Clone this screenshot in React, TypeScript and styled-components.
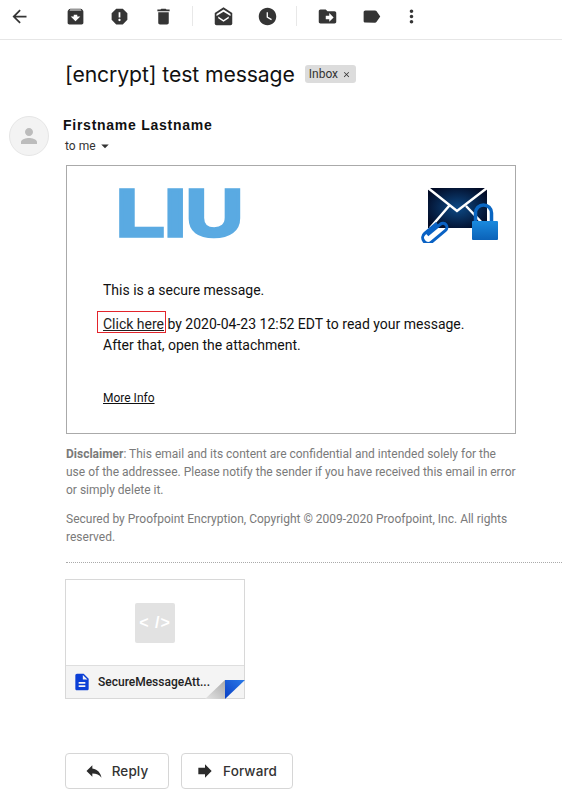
import React from "react";
import styled, { createGlobalStyle } from "styled-components";
import {
  MdArchive,
  MdArrowBack,
  MdArrowDropDown,
  MdClose,
  MdDelete,
  MdDescription,
  MdDriveFileMove,
  MdForward,
  MdLabel,
  MdMoreVert,
  MdPerson,
  MdReply,
  MdReport,
  MdWatchLater,
} from "react-icons/md";

const GlobalStyle = createGlobalStyle`
  html, body {
    margin: 0;
    padding: 0;
    background: #fff;
    font-family: Roboto, "Liberation Sans", sans-serif;
    overflow: hidden;
  }
`;

const Page = styled.div`
  width: 562px;
  height: 807px;
  overflow: hidden;
`;

const Toolbar = styled.div`
  display: flex;
  align-items: flex-start;
  height: 40px;
  padding: 4px 0 0 7px;
  box-sizing: border-box;
  border-bottom: 1px solid #e6e6e6;
`;

const IconButton = styled.div<{ $narrow?: boolean; $before?: number; $after?: number }>`
  display: flex;
  align-items: center;
  justify-content: center;
  width: ${(p) => (p.$narrow ? 24 : 44)}px;
  height: 24px;
  margin-left: ${(p) => p.$before ?? 0}px;
  margin-right: ${(p) => p.$after ?? 0}px;
  color: #353535;
  font-size: 21px;
`;

const Divider = styled.div`
  width: 1px;
  height: 20px;
  margin: 2px 8px 0 7px;
  background: #e8e8e8;
`;

const Content = styled.div`
  padding: 19px 0 0 65px;
`;

const SubjectRow = styled.div`
  display: flex;
  align-items: center;
  height: 30px;
`;

const Subject = styled.h1`
  margin: 0;
  font-family: Inter, sans-serif;
  font-size: 21.2px;
  font-weight: 400;
  letter-spacing: -0.1px;
  color: #111;
`;

const Chip = styled.span`
  display: inline-flex;
  align-items: center;
  gap: 4px;
  height: 18px;
  margin-left: 10px;
  padding: 0 5px 0 4px;
  border-radius: 3px;
  background: #dcdcdc;
  font-size: 12px;
  color: #333;
`;

const SenderRow = styled.div`
  display: flex;
  margin: 27px 0 0 -56px;
`;

const Avatar = styled.div`
  display: flex;
  align-items: center;
  justify-content: center;
  width: 40px;
  height: 40px;
  border-radius: 50%;
  box-sizing: border-box;
  border: 1px solid #e6e6e6;
  background: #f3f3f3;
  color: #bcbcbc;
  font-size: 24px;
`;

const SenderText = styled.div`
  margin: 1px 0 0 14px;
`;

const SenderName = styled.div`
  font-family: "Liberation Sans", sans-serif;
  font-size: 14px;
  font-weight: 700;
  letter-spacing: 0.74px;
  line-height: 16px;
  color: #111;
`;

const ToMe = styled.div`
  display: flex;
  align-items: center;
  margin: 4px 0 0 2px;
  font-size: 12px;
  line-height: 16px;
  color: #333;
`;

const MessageCard = styled.div`
  box-sizing: border-box;
  width: 450px;
  height: 269px;
  margin: 9px 0 0 1px;
  padding: 21px 17px 0 36px;
  border: 1px solid #aaa;
`;

const Branding = styled.div`
  display: flex;
  justify-content: space-between;
  height: 56px;
`;

const LogoMark = styled.svg`
  margin-left: 15px;
  overflow: visible;
`;

const BodyLine = styled.p<{ $top: number }>`
  margin: ${(p) => p.$top}px 0 0;
  font-size: 14px;
  line-height: 21px;
  color: #111;
`;

const SecureLink = styled.a`
  position: relative;
  color: #222;
  text-decoration: underline;

  &::after {
    content: "";
    position: absolute;
    left: -6px;
    right: -2px;
    top: -5px;
    bottom: -1px;
    border: 1px solid #e3242b;
  }
`;

const MoreInfo = styled.a`
  display: block;
  margin-top: 34px;
  font-size: 12px;
  line-height: 16px;
  color: #111;
  text-decoration: underline;
`;

const FinePrint = styled.p<{ $top: number }>`
  width: 452px;
  margin: ${(p) => p.$top}px 0 0 1px;
  font-size: 12px;
  line-height: 18px;
  color: #7a7a7a;

  b {
    font-weight: 700;
  }
`;

const Rule = styled.div`
  margin: 16px 0 0 1px;
  border-top: 1px dotted #aaa;
`;

const Attachment = styled.div`
  position: relative;
  box-sizing: border-box;
  width: 180px;
  height: 120px;
  margin-top: 16px;
  border: 1px solid #d8d8d8;
  display: flex;
  flex-direction: column;
`;

const Preview = styled.div`
  flex: 1;
  display: flex;
  align-items: center;
  justify-content: center;
`;

const CodeTile = styled.div`
  display: flex;
  align-items: center;
  justify-content: center;
  width: 40px;
  height: 40px;
  border-radius: 2px;
  background: #e2e2e2;
  color: #fff;
  font-family: "Liberation Sans", sans-serif;
  font-size: 16px;
  font-weight: 700;
  letter-spacing: 1px;
`;

const AttachmentBar = styled.div`
  display: flex;
  align-items: center;
  height: 32px;
  padding-left: 6px;
  border-top: 1px solid #dedede;
  background: #f4f4f4;
  color: #0b3fd6;
  font-size: 20px;
`;

const FileName = styled.span`
  margin-left: 6px;
  font-size: 12px;
  font-weight: 500;
  color: #222;
`;

const Fold = styled.svg`
  position: absolute;
  right: -1px;
  bottom: -1px;
`;

const Actions = styled.div`
  display: flex;
  gap: 12px;
  margin-top: 54px;
`;

const ActionButton = styled.button<{ $width: number }>`
  display: flex;
  align-items: center;
  justify-content: center;
  gap: 8px;
  width: ${(p) => p.$width}px;
  height: 36px;
  padding: 0 2px 0 0;
  border: 1px solid #d6d6d6;
  border-radius: 4px;
  background: #fff;
  font-family: Inter, Roboto, sans-serif;
  font-size: 13.5px;
  font-weight: 500;
  letter-spacing: 0.1px;
  color: #333;

  svg {
    font-size: 20px;
    color: #2b2b2b;
  }
`;

const LiuLogo = () => (
  <LogoMark width="124" height="54" viewBox="0 0 124 54">
    <text
      x="-2"
      y="49"
      textLength="127"
      lengthAdjust="spacingAndGlyphs"
      fontFamily="Liberation Sans"
      fontWeight="700"
      fontSize="67"
      fill="#5aaae2"
      stroke="#5aaae2"
      strokeWidth="3.5"
    >
      LIU
    </text>
  </LogoMark>
);

const MarkUnreadIcon = () => (
  <svg width="21" height="21" viewBox="0 0 24 24" fill="currentColor">
    <path d="M12 1.5 2 8v12a2 2 0 0 0 2 2h16a2 2 0 0 0 2-2V8z" />
    <path d="M12 4 4 9.2v2.2l8-4.8 8 4.8V9.2z" fill="#fff" />
    <path d="m6 12 6 4 6-4v2l-6 4-6-4z" fill="#fff" />
  </svg>
);

const SecureMailIcon = () => (
  <svg width="82" height="56" viewBox="0 0 82 56">
    <defs>
      <radialGradient id="mailGlow" cx="50%" cy="50%" r="60%">
        <stop offset="0%" stopColor="#0d4a86" />
        <stop offset="100%" stopColor="#020b26" />
      </radialGradient>
      <linearGradient id="lockBody" x1="0" y1="0" x2="0" y2="1">
        <stop offset="0%" stopColor="#1a8ade" />
        <stop offset="100%" stopColor="#0b62b8" />
      </linearGradient>
    </defs>
    <rect x="12" y="1" width="59" height="40" fill="url(#mailGlow)" />
    <path d="M12 1 41 24 71 1M14 41 33 19M71 41 50 19" fill="none" stroke="#fff" strokeWidth="2.5" />
    <path d="M59.5 36V26a8 8 0 0 1 16 0V36" fill="none" stroke="#0a66c2" strokeWidth="3.5" />
    <rect x="56" y="34" width="26" height="19" rx="1" fill="url(#lockBody)" />
    <path
      d="M0-9V7a5.5 5.5 0 0 0 11 0V-11a4 4 0 0 0-8 0V6"
      fill="none"
      stroke="#0a62c4"
      strokeWidth="3"
      transform="translate(14 42) rotate(50)"
    />
  </svg>
);

export default function App() {
  return (
    <Page>
      <GlobalStyle />
      <Toolbar>
        <IconButton $narrow $after={22}>
          <MdArrowBack />
        </IconButton>
        <IconButton><MdArchive /></IconButton>
        <IconButton><MdReport /></IconButton>
        <IconButton><MdDelete /></IconButton>
        <Divider />
        <IconButton><MarkUnreadIcon /></IconButton>
        <IconButton><MdWatchLater /></IconButton>
        <Divider />
        <IconButton><MdDriveFileMove /></IconButton>
        <IconButton><MdLabel /></IconButton>
        <IconButton $narrow $before={6}>
          <MdMoreVert />
        </IconButton>
      </Toolbar>
      <Content>
        <SubjectRow>
          <Subject>[encrypt] test message</Subject>
          <Chip>
            Inbox <MdClose size={9} />
          </Chip>
        </SubjectRow>
        <SenderRow>
          <Avatar><MdPerson /></Avatar>
          <SenderText>
            <SenderName>Firstname Lastname</SenderName>
            <ToMe>
              to me <MdArrowDropDown size={18} />
            </ToMe>
          </SenderText>
        </SenderRow>
        <MessageCard>
          <Branding>
            <LiuLogo />
            <SecureMailIcon />
          </Branding>
          <BodyLine $top={37}>This is a secure message.</BodyLine>
          <BodyLine $top={13}>
            <SecureLink>Click here</SecureLink> by 2020-04-23 12:52 EDT to read your message.
            <br />
            After that, open the attachment.
          </BodyLine>
          <MoreInfo>More Info</MoreInfo>
        </MessageCard>
        <FinePrint $top={11}>
          <b>Disclaimer</b>: This email and its content are confidential and intended solely for the use of the
          addressee. Please notify the sender if you have received this email in error or simply delete it.
        </FinePrint>
        <FinePrint $top={11}>
          Secured by Proofpoint Encryption, Copyright © 2009-2020 Proofpoint, Inc. All rights reserved.
        </FinePrint>
        <Rule />
        <Attachment>
          <Preview>
            <CodeTile>&lt; /&gt;</CodeTile>
          </Preview>
          <AttachmentBar>
            <MdDescription />
            <FileName>SecureMessageAtt...</FileName>
          </AttachmentBar>
          <Fold width="40" height="20" viewBox="0 0 40 20">
            <defs>
              <linearGradient id="foldPaper" x1="0" y1="1" x2="1" y2="0">
                <stop offset="0%" stopColor="#e4e4e4" />
                <stop offset="100%" stopColor="#a9a9a9" />
              </linearGradient>
              <linearGradient id="foldBlue" x1="0" y1="1" x2="1" y2="0">
                <stop offset="0%" stopColor="#0a3fc4" />
                <stop offset="100%" stopColor="#2a7ae8" />
              </linearGradient>
            </defs>
            <polygon points="0,20 20,1 20,20" fill="url(#foldPaper)" />
            <polygon points="20,1 40,1 20,20" fill="url(#foldBlue)" />
          </Fold>
        </Attachment>
        <Actions>
          <ActionButton $width={104}>
            <MdReply /> Reply
          </ActionButton>
          <ActionButton $width={112}>
            <MdForward /> Forward
          </ActionButton>
        </Actions>
      </Content>
    </Page>
  );
}
